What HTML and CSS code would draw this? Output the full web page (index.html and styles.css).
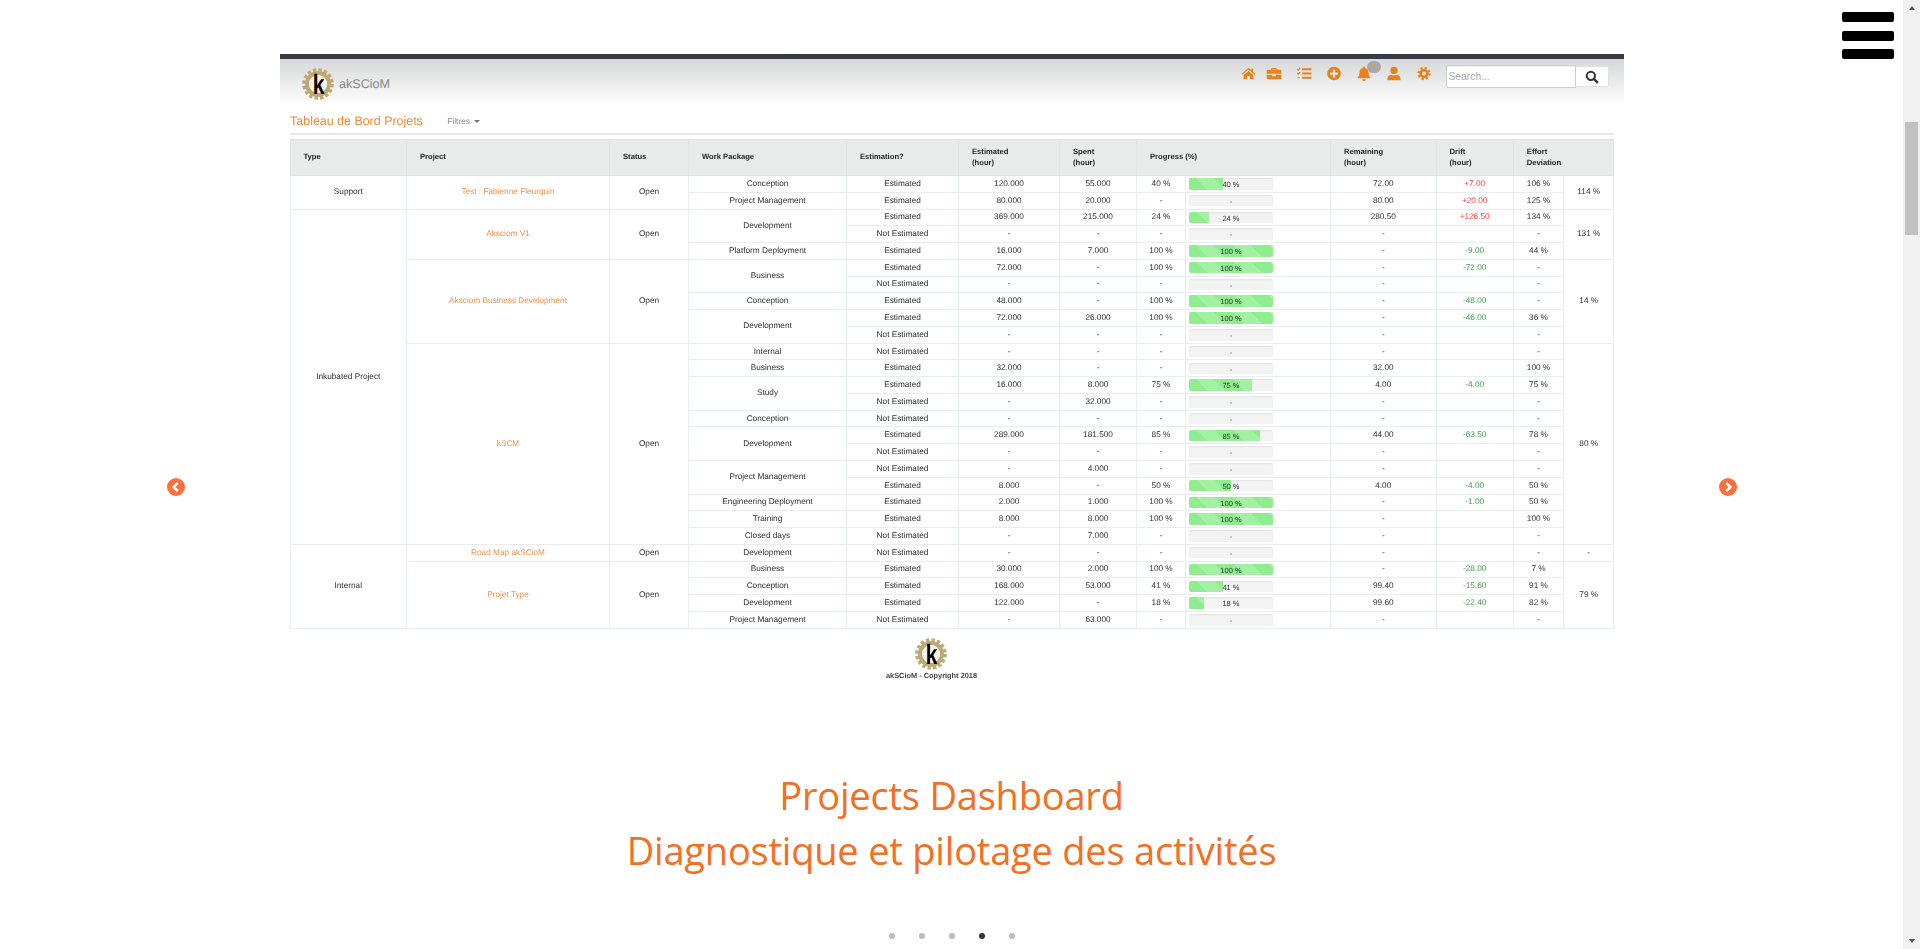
FILE: index.html
```html
<!DOCTYPE html>
<html lang="fr">
<head>
<meta charset="utf-8">
<title>akSCioM</title>
<link rel="stylesheet" href="styles.css">
</head>
<body>
<div class="page">
  <main class="stage">
    <section class="shot">
      <header class="topbar">
        <div class="brand">
          <svg class="gear" viewBox="0 0 32 32"><circle cx="16" cy="16" r="14" fill="none" stroke="#bda974" stroke-width="3.600" stroke-dasharray="3.300 2.200"/><circle cx="16" cy="16" r="11" fill="none" stroke="#bda974" stroke-width="4"/><circle cx="16" cy="16" r="9" fill="#f6f3ea"/><text x="22" y="26" text-anchor="middle" class="gear-k" transform="scale(.75 1)">k</text></svg>
          <span>akSCioM</span>
        </div>
        <nav class="tools">
          <svg class="ico ico-first" viewBox="0 0 16 16"><path d="M8 1.800.4 8.400l.9 1L8 3.700l6.700 5.700.9-1-2.600-2.200V2.800h-2v1.700z"/><path d="M2.800 9.600 8 5.200l5.200 4.400V14H9.600v-3.400H6.400V14H2.800z"/></svg>
          <svg class="ico" viewBox="0 0 16 16"><path d="M5 4V2.800A.8.8 0 0 1 5.800 2h4.400a.8.8 0 0 1 .8.8V4h3.500A1.300 1.300 0 0 1 15.800 5.300V8.300H.2V5.300A1.300 1.300 0 0 1 1.500 4zM6.400 4h3.200V3.300H6.400z" fill-rule="evenodd"/><path d="M.2 9.300h5.800v1.500h4V9.300h5.800v3.500a1.200 1.200 0 0 1-1.200 1.200H1.400a1.200 1.200 0 0 1-1.200-1.200z"/></svg>
          <svg class="ico" viewBox="0 0 16 16"><path d="M6 2.500h10v2H6zM6 7h10v2H6zM6 11.500h10v2H6z"/><path d="M.8 3.200 2 4.400 4 2M.8 7.700 2 8.900 4 6.500M1 12.500h2.500" fill="none" stroke="#e8811c" stroke-width="1.200"/></svg>
          <svg class="ico" viewBox="0 0 16 16"><path fill-rule="evenodd" d="M8 .7a7.300 7.300 0 1 1 0 14.600A7.300 7.300 0 0 1 8 .7zM6.800 3.800v3H3.800v2.400h3v3h2.400v-3h3V6.800h-3v-3z"/></svg>
          <span class="bell-wrap">
            <svg class="ico" viewBox="0 0 16 16"><path d="M8 .5a1.100 1.100 0 0 1 1.100 1.100v.6c2.300.5 3.700 2.400 3.700 4.700 0 3 .8 4 1.900 5.100v1H1.300v-1C2.400 10.900 3.200 9.900 3.200 6.900c0-2.300 1.400-4.200 3.700-4.700v-.6A1.100 1.100 0 0 1 8 .5zM6 14h4a2 2 0 0 1-4 0z"/></svg>
            <b class="badge">0</b>
          </span>
          <svg class="ico" viewBox="0 0 16 16"><circle cx="8" cy="4.700" r="3.900"/><path d="M1 15.200v-1.600c0-2.500 1.900-4 4-4h.7a5.500 5.500 0 0 0 4.600 0h.7c2.100 0 4 1.500 4 4v1.600z"/></svg>
          <svg class="ico" viewBox="0 0 16 16"><circle cx="8" cy="8" r="5.700" fill="none" stroke="#e8811c" stroke-width="2.800" stroke-dasharray="2.240 2.240"/><circle cx="8" cy="8" r="3.600" fill="none" stroke="#e8811c" stroke-width="2.800"/></svg>
        </nav>
        <form class="search">
          <input class="search-input" type="text" placeholder="Search...">
          <span class="search-btn"><svg class="lens" viewBox="0 0 16 16"><circle cx="6.700" cy="6.700" r="4.700" fill="none" stroke="#333" stroke-width="2.300"/><path d="m10.200 10.200 4.500 4.500" stroke="#333" stroke-width="2.800"/></svg></span>
        </form>
      </header>
      <div class="heading">
        <h1 class="title">Tableau de Bord Projets</h1>
        <span class="filters">Filtres<i class="caret"></i></span>
      </div>
      <hr class="rule">
      <table class="grid">
        <colgroup>
          <col class="c1"><col class="c2"><col class="c3"><col class="c4"><col class="c5"><col class="c6"><col class="c7"><col class="c8"><col class="c9"><col class="c10"><col class="c11"><col class="c12"><col class="c13">
        </colgroup>
        <thead>
          <tr>
            <th>Type</th><th>Project</th><th>Status</th><th>Work Package</th><th>Estimation?</th>
            <th>Estimated<br>(hour)</th><th>Spent<br>(hour)</th><th colspan="2">Progress (%)</th>
            <th>Remaining<br>(hour)</th><th>Drift<br>(hour)</th><th colspan="2">Effort<br>Deviation</th>
          </tr>
        </thead>
        <tbody>
          <tr><td rowspan="2">Support</td><td rowspan="2" class="link">Test : Fabienne Fleurquin</td><td rowspan="2">Open</td><td>Conception</td><td>Estimated</td><td>120.000</td><td>55.000</td><td>40 %</td><td class="bc"><div class="bar"><div class="fill" style="width:40%"></div><span>40 %</span></div></td><td>72.00</td><td class="up">+7.00</td><td>106 %</td><td rowspan="2">114 %</td></tr>
          <tr><td>Project Management</td><td>Estimated</td><td>80.000</td><td>20.000</td><td>-</td><td class="bc"><div class="bar"><span>-</span></div></td><td>80.00</td><td class="up">+20.00</td><td>125 %</td></tr>

          <tr><td rowspan="20">Inkubated Project</td><td rowspan="3" class="link">Aksciom V1</td><td rowspan="3">Open</td><td rowspan="2">Development</td><td>Estimated</td><td>369.000</td><td>215.000</td><td>24 %</td><td class="bc"><div class="bar"><div class="fill" style="width:24%"></div><span>24 %</span></div></td><td>280.50</td><td class="up">+126.50</td><td>134 %</td><td rowspan="3">131 %</td></tr>
          <tr><td>Not Estimated</td><td>-</td><td>-</td><td>-</td><td class="bc"><div class="bar"><span>-</span></div></td><td>-</td><td></td><td>-</td></tr>
          <tr><td>Platform Deployment</td><td>Estimated</td><td>16.000</td><td>7.000</td><td>100 %</td><td class="bc"><div class="bar"><div class="fill" style="width:100%"></div><span>100 %</span></div></td><td>-</td><td class="down">-9.00</td><td>44 %</td></tr>

          <tr><td rowspan="5" class="link">Aksciom Business Development</td><td rowspan="5">Open</td><td rowspan="2">Business</td><td>Estimated</td><td>72.000</td><td>-</td><td>100 %</td><td class="bc"><div class="bar"><div class="fill" style="width:100%"></div><span>100 %</span></div></td><td>-</td><td class="down">-72.00</td><td>-</td><td rowspan="5">14 %</td></tr>
          <tr><td>Not Estimated</td><td>-</td><td>-</td><td>-</td><td class="bc"><div class="bar"><span>-</span></div></td><td>-</td><td></td><td>-</td></tr>
          <tr><td>Conception</td><td>Estimated</td><td>48.000</td><td>-</td><td>100 %</td><td class="bc"><div class="bar"><div class="fill" style="width:100%"></div><span>100 %</span></div></td><td>-</td><td class="down">-48.00</td><td>-</td></tr>
          <tr><td rowspan="2">Development</td><td>Estimated</td><td>72.000</td><td>26.000</td><td>100 %</td><td class="bc"><div class="bar"><div class="fill" style="width:100%"></div><span>100 %</span></div></td><td>-</td><td class="down">-46.00</td><td>36 %</td></tr>
          <tr><td>Not Estimated</td><td>-</td><td>-</td><td>-</td><td class="bc"><div class="bar"><span>-</span></div></td><td>-</td><td></td><td>-</td></tr>

          <tr><td rowspan="12" class="link">kSCM</td><td rowspan="12">Open</td><td>Internal</td><td>Not Estimated</td><td>-</td><td>-</td><td>-</td><td class="bc"><div class="bar"><span>-</span></div></td><td>-</td><td></td><td>-</td><td rowspan="12">80 %</td></tr>
          <tr><td>Business</td><td>Estimated</td><td>32.000</td><td>-</td><td>-</td><td class="bc"><div class="bar"><span>-</span></div></td><td>32.00</td><td></td><td>100 %</td></tr>
          <tr><td rowspan="2">Study</td><td>Estimated</td><td>16.000</td><td>8.000</td><td>75 %</td><td class="bc"><div class="bar"><div class="fill" style="width:75%"></div><span>75 %</span></div></td><td>4.00</td><td class="down">-4.00</td><td>75 %</td></tr>
          <tr><td>Not Estimated</td><td>-</td><td>32.000</td><td>-</td><td class="bc"><div class="bar"><span>-</span></div></td><td>-</td><td></td><td>-</td></tr>
          <tr><td>Conception</td><td>Not Estimated</td><td>-</td><td>-</td><td>-</td><td class="bc"><div class="bar"><span>-</span></div></td><td>-</td><td></td><td>-</td></tr>
          <tr><td rowspan="2">Development</td><td>Estimated</td><td>289.000</td><td>181.500</td><td>85 %</td><td class="bc"><div class="bar"><div class="fill" style="width:85%"></div><span>85 %</span></div></td><td>44.00</td><td class="down">-63.50</td><td>78 %</td></tr>
          <tr><td>Not Estimated</td><td>-</td><td>-</td><td>-</td><td class="bc"><div class="bar"><span>-</span></div></td><td>-</td><td></td><td>-</td></tr>
          <tr><td rowspan="2">Project Management</td><td>Not Estimated</td><td>-</td><td>4.000</td><td>-</td><td class="bc"><div class="bar"><span>-</span></div></td><td>-</td><td></td><td>-</td></tr>
          <tr><td>Estimated</td><td>8.000</td><td>-</td><td>50 %</td><td class="bc"><div class="bar"><div class="fill" style="width:50%"></div><span>50 %</span></div></td><td>4.00</td><td class="down">-4.00</td><td>50 %</td></tr>
          <tr><td>Engineering Deployment</td><td>Estimated</td><td>2.000</td><td>1.000</td><td>100 %</td><td class="bc"><div class="bar"><div class="fill" style="width:100%"></div><span>100 %</span></div></td><td>-</td><td class="down">-1.00</td><td>50 %</td></tr>
          <tr><td>Training</td><td>Estimated</td><td>8.000</td><td>8.000</td><td>100 %</td><td class="bc"><div class="bar"><div class="fill" style="width:100%"></div><span>100 %</span></div></td><td>-</td><td></td><td>100 %</td></tr>
          <tr><td>Closed days</td><td>Not Estimated</td><td>-</td><td>7.000</td><td>-</td><td class="bc"><div class="bar"><span>-</span></div></td><td>-</td><td></td><td>-</td></tr>

          <tr><td rowspan="5">Internal</td><td class="link">Road Map akSCioM</td><td>Open</td><td>Development</td><td>Not Estimated</td><td>-</td><td>-</td><td>-</td><td class="bc"><div class="bar"><span>-</span></div></td><td>-</td><td></td><td>-</td><td>-</td></tr>
          <tr><td rowspan="4" class="link">Projet Type</td><td rowspan="4">Open</td><td>Business</td><td>Estimated</td><td>30.000</td><td>2.000</td><td>100 %</td><td class="bc"><div class="bar"><div class="fill" style="width:100%"></div><span>100 %</span></div></td><td>-</td><td class="down">-28.00</td><td>7 %</td><td rowspan="4">79 %</td></tr>
          <tr><td>Conception</td><td>Estimated</td><td>168.000</td><td>53.000</td><td>41 %</td><td class="bc"><div class="bar"><div class="fill" style="width:41%"></div><span>41 %</span></div></td><td>99.40</td><td class="down">-15.60</td><td>91 %</td></tr>
          <tr><td>Development</td><td>Estimated</td><td>122.000</td><td>-</td><td>18 %</td><td class="bc"><div class="bar"><div class="fill" style="width:18%"></div><span>18 %</span></div></td><td>99.60</td><td class="down">-22.40</td><td>82 %</td></tr>
          <tr><td>Project Management</td><td>Not Estimated</td><td>-</td><td>63.000</td><td>-</td><td class="bc"><div class="bar"><span>-</span></div></td><td>-</td><td></td><td>-</td></tr>
        </tbody>
      </table>
      <footer class="shot-foot">
        <svg class="gear" viewBox="0 0 32 32"><circle cx="16" cy="16" r="14" fill="none" stroke="#bda974" stroke-width="3.600" stroke-dasharray="3.300 2.200"/><circle cx="16" cy="16" r="11" fill="none" stroke="#bda974" stroke-width="4"/><circle cx="16" cy="16" r="9" fill="#f6f3ea"/><text x="22" y="26" text-anchor="middle" class="gear-k" transform="scale(.75 1)">k</text></svg>
        <p>akSCioM - Copyright 2018</p>
      </footer>
    </section>
    <h2 class="caption">Projects Dashboard<br>Diagnostique et pilotage des activités</h2>
    <ol class="dots">
      <li></li><li></li><li></li><li class="on"></li><li></li>
    </ol>
    <a class="nav-arrow prev" aria-label="Previous"><svg viewBox="0 0 18 18"><circle cx="9" cy="9" r="9"/><path d="M10.800 4.800 6.600 9l4.200 4.200"/></svg></a>
    <a class="nav-arrow next" aria-label="Next"><svg viewBox="0 0 18 18"><circle cx="9" cy="9" r="9"/><path d="M7.200 4.800 11.400 9l-4.200 4.200"/></svg></a>
    <button class="burger" aria-label="Menu"><span></span><span></span><span></span></button>
  </main>
  <aside class="scrollbar" aria-hidden="true">
    <i class="arrow-up"></i>
    <div class="track"><div class="thumb"></div></div>
    <i class="arrow-down"></i>
  </aside>
</div>
</body>
</html>
```

FILE: styles.css
```css
* { box-sizing: border-box; }
html, body { margin: 0; height: 949px; overflow: hidden; background: #fff; }
.page { display: flex; height: 949px; }

.stage { position: relative; flex: 1; min-width: 0; padding-top: 54px; }

/* embedded screenshot */
.shot {
  width: 1344px;
  margin: 0 auto;
  font-family: "Liberation Sans", Arial, sans-serif;
  color: #333;
  text-rendering: geometricPrecision;
  filter: blur(.35px);
}
.topbar {
  display: flex;
  align-items: flex-start;
  height: 51px;
  border-top: 5px solid #3a3a46;
  background: linear-gradient(#d6d7d8 0, #f3f3f3 70%, #fff 100%);
  padding-right: 15px;
}
.brand { display: flex; align-items: center; gap: 5.500px; margin: 9px auto 0 22px; font-size: 12.600px; color: #858585; }
.gear { display: block; width: 32px; height: 32px; }
.gear-k { font: 700 28px "Liberation Sans", Arial, sans-serif; fill: #000; }

.tools { display: flex; align-items: center; height: 28px; margin-right: 7px; }
.ico { display: block; width: 30px; height: 15px; fill: #e8811c; }
.ico-first { width: 21px; }
.bell-wrap { position: relative; display: block; width: 30px; }
.badge {
  position: absolute; left: 18px; top: -5px;
  width: 14px; height: 12px; border-radius: 7px;
  background: #a9a9a9; color: #d9a23a;
  font: 400 6.500px/12px "Liberation Sans", Arial, sans-serif; text-align: center;
}
.search { display: flex; align-items: center; margin-top: 6px; }
.search-input {
  width: 130px; height: 23px; padding: 0 2px;
  font: 10.300px "Liberation Sans", Arial, sans-serif;
  border: 1px solid #cfcfcf; border-radius: 2px 0 0 2px; background: #fff;
  box-shadow: inset 0 1px 1px rgba(0,0,0,.08); outline: none;
}
.search-input::placeholder { color: #a8a8a8; }
.search-btn {
  display: flex; align-items: center; justify-content: center;
  width: 33px; height: 21px; background: #fff;
  border: 1px solid #e2e2e2; border-left: 0; border-radius: 0 2px 2px 0;
}
.lens { width: 14px; height: 14px; }

.heading { display: flex; align-items: center; gap: 24.500px; height: 24px; margin: 4px 10px 0 10.600px; }
.title { margin: 0; font-size: 12.450px; font-weight: 400; color: #f0893a; }
.filters { font-size: 8.300px; color: #8a8a8a; }
.caret {
  display: inline-block; margin-left: 4px; vertical-align: middle;
  border: 3px solid transparent; border-top-color: #777; border-bottom: 0;
}
.rule { height: 2px; margin: 0 10px 4px; border: 0; background: #e6e6e6; }

.grid {
  width: 1324px; height: 489px; margin-left: 10px;
  table-layout: fixed; border-collapse: collapse;
  font-size: 8.250px; line-height: 10px; color: #2e2e2e;
}
.c1 { width: 116.500px; } .c2 { width: 203px; } .c3 { width: 79px; }
.c4 { width: 158px; } .c5 { width: 112px; } .c6 { width: 101px; }
.c7 { width: 77px; } .c8 { width: 49px; } .c9 { width: 145px; }
.c10 { width: 105.500px; } .c11 { width: 77.300px; } .c12 { width: 50.400px; }
.c13 { width: 50px; }
.grid th, .grid td { border: 1px solid #e8eded; padding: 0; overflow: hidden; white-space: nowrap; }
.grid th {
  height: 36px; padding-left: 13px; background: #e9eaea;
  text-align: left; font-size: 7.650px; line-height: 10.500px; font-weight: 700; color: #1f1f1f;
  border-color: #dfe4e4;
}
.grid td { height: 16.780px; text-align: center; }
.grid td.link { color: #f0914a; }
.grid td.up { color: #ff3b3b; }
.grid td.down { color: #3f9a4c; }
.grid td.bc { padding: 0 3px; }
.bar {
  position: relative; width: 84px; height: 11.500px; border-radius: 2px; overflow: hidden;
  background: #f3f3f3; box-shadow: inset 0 1px 2px rgba(0,0,0,.07);
  font-size: 7.500px; line-height: 13px; color: #333; text-align: center;
}
.bar span { position: relative; display: block; }
.fill {
  position: absolute; left: 0; top: 0; bottom: 0;
  background: repeating-linear-gradient(45deg, #8fec8f 0 13px, #a2f1a2 13px 26px);
}
.shot-foot { display: flex; flex-direction: column; align-items: center; padding: 9px 42px 0 0; }
.shot-foot p { margin: 1px 0 0 2px; font-size: 7.400px; font-weight: 700; line-height: 10px; color: #444; }

/* slide caption */
.caption {
  margin: 87px 0 0;
  font: 400 38px/55px "Open Sans", sans-serif;
  letter-spacing: -.2px;
  color: #f36f21;
  text-align: center;
}
.dots { display: flex; justify-content: center; gap: 24px; margin: 55px 0 0; padding: 0; list-style: none; }
.dots li { width: 6px; height: 6px; border-radius: 50%; background: #bcbcbc; }
.dots .on { background: #333; }

.nav-arrow { position: absolute; top: 478px; width: 18px; height: 18px; }
.nav-arrow svg { display: block; }
.nav-arrow circle { fill: #ff6f3d; }
.nav-arrow path { fill: none; stroke: #fff; stroke-width: 2.600; }
.prev { left: 166.500px; }
.next { left: 1719px; }

.burger { position: absolute; left: 1842px; top: 12px; width: 52px; padding: 0; border: 0; background: none; }
.burger span { display: block; height: 10px; margin-bottom: 8.500px; border-radius: 2px; background: #000; }

/* page scrollbar */
.scrollbar { display: flex; flex-direction: column; align-items: center; width: 17px; background: #f1f1f1; }
.arrow-up, .arrow-down { flex: none; width: 0; height: 0; margin: 6px 0; border: 3.500px solid transparent; }
.arrow-up { border-top: 0; border-bottom: 4px solid #505050; }
.arrow-down { border-bottom: 0; border-top: 4px solid #505050; }
.track { flex: 1; width: 100%; padding: 106px 2px 0; }
.thumb { height: 113px; background: #c1c1c1; }
```
